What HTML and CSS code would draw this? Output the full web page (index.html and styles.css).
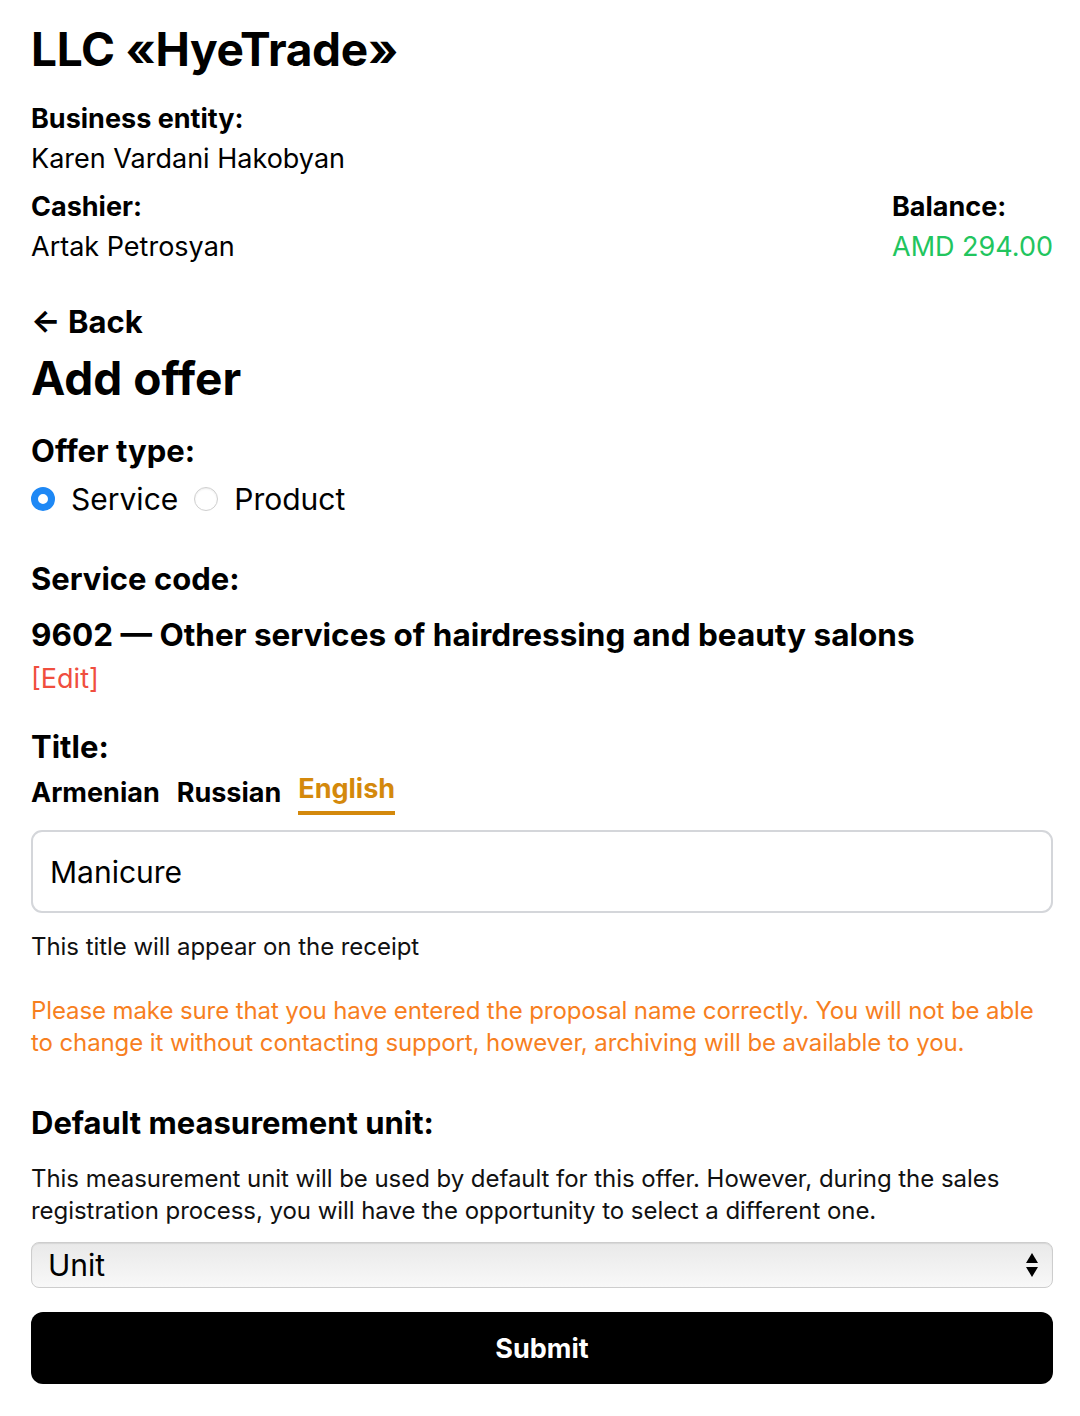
FILE: index.html
```html
<!DOCTYPE html>
<html lang="en">
<head>
    <meta charset="UTF-8">
    <meta name="viewport" content="width=device-width, initial-scale=1.0">
    <title>Add offer</title>
    <link rel="stylesheet" href="styles.css">
</head>
<body>
    <div class="page">
        <h1 class="company">LLC «HyeTrade»</h1>

        <div class="info">
            <div class="info-item">
                <div class="info-label">Business entity:</div>
                <div class="info-value">Karen Vardani Hakobyan</div>
            </div>
            <div class="info-row">
                <div class="info-item">
                    <div class="info-label">Cashier:</div>
                    <div class="info-value">Artak Petrosyan</div>
                </div>
                <div class="info-item">
                    <div class="info-label">Balance:</div>
                    <div class="info-value balance">AMD 294.00</div>
                </div>
            </div>
        </div>

        <a class="back" href="#">&larr; Back</a>
        <h2 class="page-title">Add offer</h2>

        <form class="offer-form">
            <div class="field">
                <div class="field-label">Offer type:</div>
                <div class="radios">
                    <label class="radio"><input type="radio" name="type" checked> Service</label>
                    <label class="radio"><input type="radio" name="type"> Product</label>
                </div>
            </div>

            <div class="field">
                <div class="field-label">Service code:</div>
                <div class="code">9602 — Other services of hairdressing and beauty salons</div>
                <a class="edit" href="#">[Edit]</a>
            </div>

            <div class="field">
                <div class="field-label">Title:</div>
                <div class="tabs">
                    <span class="tab">Armenian</span>
                    <span class="tab">Russian</span>
                    <span class="tab active">English</span>
                </div>
                <input class="text-input" type="text" value="Manicure">
                <p class="hint">This title will appear on the receipt</p>
                <p class="warning">Please make sure that you have entered the proposal name correctly. You will not be able to change it without contacting support, however, archiving will be available to you.</p>
            </div>

            <div class="field">
                <div class="field-label">Default measurement unit:</div>
                <p class="hint">This measurement unit will be used by default for this offer. However, during the sales registration process, you will have the opportunity to select a different one.</p>
                <div class="select-wrap">
                    <select class="select">
                        <option>Unit</option>
                    </select>
                    <svg class="select-arrows" width="14" height="26" viewBox="0 0 14 26">
                        <path d="M7 1 L13 11 L1 11 Z" fill="#000"/>
                        <path d="M1 15 L13 15 L7 25 Z" fill="#000"/>
                    </svg>
                </div>
            </div>

            <button class="submit" type="submit">Submit</button>
        </form>
    </div>
</body>
</html>
```

FILE: styles.css
```css
body {
    margin: 0;
    padding: 0;
    background-color: #fff;
    color: #000;
    font-family: Inter, "Noto Sans", sans-serif;
}

.page {
    padding: 21px 27px 30px 31px;
}

.company {
    margin: 0 0 22px;
    font-size: 46px;
    font-weight: 700;
    letter-spacing: -0.3px;
    line-height: 56px;
}

.info {
    display: flex;
    flex-direction: column;
    gap: 8px;
}

.info-row {
    display: flex;
    justify-content: space-between;
}

.info-label {
    font-size: 27px;
    font-weight: 700;
    line-height: 40px;
}

.info-value {
    font-size: 27px;
    line-height: 40px;
}

.balance {
    color: #22c55e;
}

.back {
    display: block;
    margin-top: 35px;
    color: #000;
    text-decoration: none;
    font-size: 31px;
    font-weight: 700;
    line-height: 40px;
}

.page-title {
    margin: 6px 0 21px;
    font-size: 46px;
    font-weight: 700;
    line-height: 60px;
}

.field {
    margin-bottom: 24px;
}

.field-label {
    font-size: 31px;
    font-weight: 700;
    line-height: 44px;
}

.radios {
    display: flex;
    gap: 16px;
    margin-top: 2px;
    margin-bottom: 34px;
}

.radio {
    display: flex;
    align-items: center;
    gap: 16px;
    font-size: 30px;
    line-height: 48px;
}

.radio input {
    appearance: none;
    width: 24px;
    height: 24px;
    margin: 0;
    border-radius: 50%;
    border: 1px solid #cfcfcf;
    background: #fff;
    box-shadow: inset 0 1px 2px rgba(0, 0, 0, 0.08);
}

.radio input:checked {
    border: 7px solid #1e88f5;
    box-shadow: none;
}

.code {
    margin-top: 12px;
    font-size: 31.5px;
    font-weight: 700;
    line-height: 44px;
}

.edit {
    display: inline-block;
    color: #f04e3e;
    text-decoration: none;
    font-size: 27px;
    line-height: 44px;
}

.tabs {
    display: flex;
    gap: 17px;
    margin-top: 4px;
    margin-bottom: 15px;
}

.tab {
    font-size: 27px;
    font-weight: 700;
    line-height: 40px;
    padding-bottom: 2px;
}

.tab.active {
    color: #d4890c;
    border-bottom: 4px solid #d4890c;
    margin-top: -4px;
}

.text-input {
    display: block;
    box-sizing: border-box;
    width: 100%;
    height: 83px;
    padding: 0 17px;
    border: 2px solid #d4d6da;
    border-radius: 11px;
    font-family: inherit;
    font-size: 30px;
    color: #000;
    outline: none;
}

.hint {
    margin: 18px 0 0;
    font-size: 24px;
    line-height: 32px;
    letter-spacing: -0.05px;
    color: #111;
}

.warning {
    margin: 32px 0 42px;
    font-size: 24px;
    line-height: 32px;
    letter-spacing: -0.1px;
    color: #f77f1f;
}

.select-wrap {
    position: relative;
    margin-top: 15px;
}

.select {
    display: block;
    box-sizing: border-box;
    width: 100%;
    height: 46px;
    padding: 0 16px;
    appearance: none;
    border: 1px solid #cdcdcd;
    border-radius: 8px;
    background: linear-gradient(#e9e9e9, #f8f8f8);
    box-shadow: inset 0 1px 1px rgba(0, 0, 0, 0.08);
    font-family: inherit;
    font-size: 30px;
    color: #000;
}

.select-arrows {
    position: absolute;
    right: 14px;
    top: 10px;
    pointer-events: none;
}

.submit {
    display: block;
    width: 100%;
    height: 72px;
    margin-top: 1px;
    border: none;
    border-radius: 12px;
    background-color: #000;
    color: #fff;
    font-family: inherit;
    font-size: 27px;
    font-weight: 700;
}
```
